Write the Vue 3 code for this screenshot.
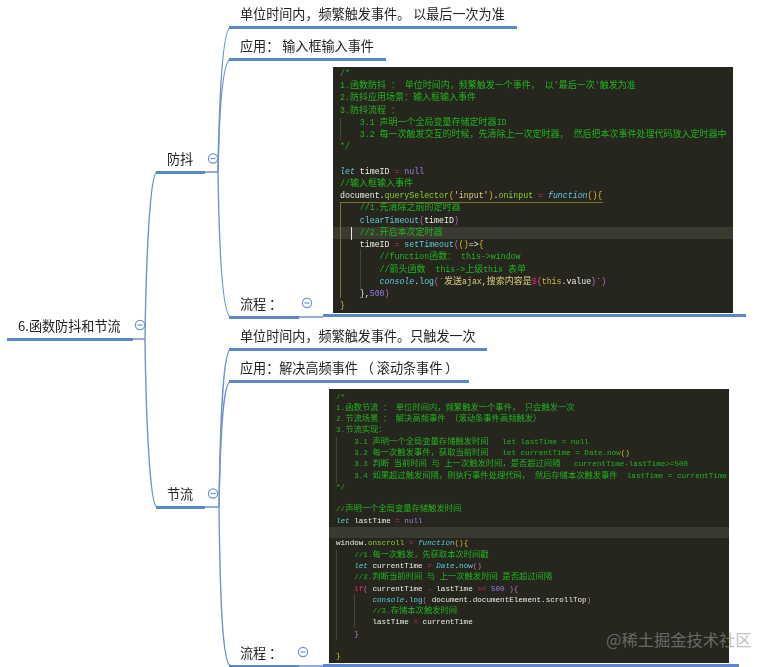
<script setup>
const cjkSplit = /([\u3000-\u303f\u4e00-\u9fff\uff00-\uffef]+)/

function row(...pairs) {
  const tokens = []
  for (let i = 0; i < pairs.length; i += 2) {
    pairs[i + 1].split(cjkSplit).forEach((text, n) => {
      if (text) tokens.push({ text, cls: [pairs[i], n % 2 ? 'cjk' : ''] })
    })
  }
  return tokens
}

const nodes = [
  { id: 1, text: '6.函数防抖和节流', x: 7, w: 126, uy: 339 },
  { id: 2, text: '防抖', x: 156, w: 49, uy: 172 },
  { id: 3, text: '节流', x: 156, w: 49, uy: 507 },
  { id: 4, text: '单位时间内，频繁触发事件。 以最后一次为准', x: 229, w: 288, uy: 27 },
  { id: 5, text: '应用： 输入框输入事件', x: 229, w: 157, uy: 59 },
  { id: 6, text: '流程 ：', x: 229, w: 70, uy: 317 },
  { id: 7, text: '单位时间内，频繁触发事件。只触发一次', x: 229, w: 258, uy: 349 },
  { id: 8, text: '应用：解决高频事件 （ 滚动条事件 ）', x: 229, w: 240, uy: 381 },
  { id: 9, text: '流程 ：', x: 229, w: 70, uy: 666 }
]

const toggles = [
  { id: 1, x: 140, y: 325 },
  { id: 2, x: 213, y: 158.5 },
  { id: 3, x: 213, y: 493.5 },
  { id: 4, x: 307, y: 303 },
  { id: 5, x: 303, y: 652 }
]

const curves = [
  'M133 339H145M205 172H218M205 507H219M299 317H323M299 666H323',
  'M145 339C146 260 150 172 157 172',
  'M145 339C146 420 150 507 157 507',
  'M218 172C219 110 222 27 231 27',
  'M218 172C219 120 222 59 231 59',
  'M218 172C219 240 222 317 231 317',
  'M219 507C220 440 222 349 231 349',
  'M219 507C220 450 222 381 231 381',
  'M219 507C220 590 222 666 231 666'
]

const debounce = [
  row('c', '/*'),
  row('c', "1.函数防抖 ： 单位时间内，频繁触发一个事件， 以'最后一次'触发为准"),
  row('c', '2.防抖应用场景：输入框输入事件'),
  row('c', '3.防抖流程 ：'),
  row('c', '    3.1 声明一个全局变量存储定时器ID'),
  row('c', '    3.2 每一次触发交互的时候，先清除上一次定时器， 然后把本次事件处理代码放入定时器中'),
  row('c', '*/'),
  [],
  row('i', 'let', 'w', ' timeID ', 'p', '=', 'u', ' null'),
  row('c', '//输入框输入事件'),
  row('w', 'document.', 'g', 'querySelector', 'y', '(', 's', "'input'", 'y', ')', 'w', '.', 'g', 'oninput', 'p', ' = ', 'i', 'function', 'y', '(){'),
  row('c', '    //1.先清除之前的定时器'),
  row('t', '    clearTimeout', 'm', '(', 'w', 'timeID', 'm', ')'),
  row('c', '    //2.开启本次定时器'),
  row('w', '    timeID ', 'p', '=', 't', ' setTimeout', 'm', '(', 'y', '()', 'w', '=>', 'y', '{'),
  row('c', '        //function函数： this->window'),
  row('c', '        //箭头函数  this->上级this 表单'),
  row('i', '        console', 'w', '.', 't', 'log', 'm', '(', 's', '`发送ajax,搜索内容是', 'p', '$', 'm', '{', 'y', 'this', 'w', '.value', 'm', '}', 's', '`', 'm', ')'),
  row('w', '    },', 'u', '500', 'm', ')'),
  row('y', '}')
]

const throttle = [
  row('c', '/*'),
  row('c', '1.函数节流 ： 单位时间内，频繁触发一个事件， 只会触发一次'),
  row('c', '2.节流场景 ： 解决高频事件 （滚动条事件高频触发）'),
  row('c', '3.节流实现：'),
  row('c', '    3.1 声明一个全局变量存储触发时间   let lastTime = null'),
  row('c', '    3.2 每一次触发事件，获取当前时间   let currentTime = Date.now', 'y', '()'),
  row('c', '    3.3 判断 当前时间 与 上一次触发时间，是否超过间隔   currentTime-lastTime>=500'),
  row('c', '    3.4 如果超过触发间隔，则执行事件处理代码， 然后存储本次触发事件  lastTime = currentTime'),
  row('c', '*/'),
  [],
  row('c', '//声明一个全局变量存储触发时间'),
  row('i', 'let', 'w', ' lastTime ', 'p', '=', 'u', ' null'),
  [],
  row('w', 'window.', 'g', 'onscroll', 'p', ' = ', 'i', 'function', 'y', '(){'),
  row('c', '    //1.每一次触发，先获取本次时间戳'),
  row('i', '    let', 'w', ' currentTime ', 'p', '=', 'i', ' Date', 'w', '.', 't', 'now', 'm', '()'),
  row('c', '    //2.判断当前时间 与 上一次触发时间 是否超过间隔'),
  row('p', '    if', 'm', '(', 'w', ' currentTime ', 'p', '-', 'w', ' lastTime ', 'p', '>=', 'u', ' 500', 'm', ' ){'),
  row('i', '        console', 'w', '.', 't', 'log', 'm', '(', 'w', ' document.documentElement.scrollTop', 'm', ')'),
  row('c', '        //3.存储本次触发时间'),
  row('w', '        lastTime ', 'p', '=', 'w', ' currentTime'),
  row('m', '    }'),
  [],
  row('y', '}')
]

const blocks = [
  {
    id: 'a', cls: 'large', x: 323, y: 67, w: 423, h: 250, gutter: 10, lines: debounce, active: 13,
    guides: [
      { id: 1, x: 7, y: 51, w: 1, h: 23, cls: 'faint' },
      { id: 2, x: 7, y: 135, w: 263, h: 1, cls: 'gold' },
      { id: 3, x: 7, y: 135, w: 1, h: 96, cls: 'gold' },
      { id: 4, x: 27, y: 182, w: 1, h: 41, cls: 'faint' },
      { id: 5, x: 18, y: 160, w: 1, h: 13, cls: 'caret' }
    ]
  },
  {
    id: 'b', cls: 'small', x: 323, y: 389, w: 416, h: 278, gutter: 6, lines: throttle, active: 12,
    guides: [
      { id: 1, x: 7, y: 48, w: 1, h: 46, cls: 'faint' },
      { id: 2, x: 7, y: 161, w: 1, h: 90, cls: 'faint' },
      { id: 3, x: 25, y: 205, w: 1, h: 34, cls: 'faint' }
    ]
  }
]
</script>

<template>
  <main class="canvas">
    <svg class="links" width="771" height="667" viewBox="0 0 771 667" fill="none">
      <path v-for="d in curves" :key="d" :d="d" />
    </svg>

    <div
      v-for="n in nodes"
      :key="n.id"
      class="node"
      :style="{ left: n.x + 'px', top: n.uy - 22.5 + 'px', width: n.w + 'px' }"
    >{{ n.text }}</div>

    <section
      v-for="b in blocks"
      :key="b.id"
      class="snippet"
      :class="b.cls"
      :style="{ left: b.x + 'px', top: b.y + 'px', width: b.w + 'px', height: b.h + 'px', paddingLeft: b.gutter + 'px' }"
    >
      <div class="editor">
        <div class="code">
          <div v-for="(line, i) in b.lines" :key="i" class="line" :class="{ active: i === b.active }">
            <span v-for="(t, j) in line" :key="j" :class="t.cls">{{ t.text }}</span>
          </div>
        </div>
        <i
          v-for="g in b.guides"
          :key="g.id"
          class="guide"
          :class="g.cls"
          :style="{ left: g.x + 'px', top: g.y + 'px', width: g.w + 'px', height: g.h + 'px' }"
        ></i>
      </div>
    </section>

    <svg class="toggles" width="771" height="667" viewBox="0 0 771 667" fill="#fff">
      <g v-for="t in toggles" :key="t.id">
        <circle :cx="t.x" :cy="t.y" r="4.6" />
        <path :d="`M${t.x - 2.6} ${t.y}h5.2`" />
      </g>
    </svg>

    <div class="mark">@稀土掘金技术社区</div>
  </main>
</template>

<style scoped>
.canvas {
  position: relative;
  width: 771px;
  height: 667px;
  overflow: hidden;
  background: #fff;
  font-family: "Noto Sans CJK SC", "Liberation Sans", sans-serif;
}

.links {
  position: absolute;
  inset: 0;
}

.links path {
  stroke: #6d94cc;
  stroke-width: 1.4;
}

.toggles {
  position: absolute;
  inset: 0;
}

.toggles circle,
.toggles path {
  stroke: #6f95cf;
  stroke-width: 1.2;
}

.node {
  position: absolute;
  box-sizing: border-box;
  height: 24px;
  padding: 0 0 1px 11px;
  border-bottom: 3px solid #5b87c5;
  font-size: 13.1px;
  line-height: 18px;
  color: #222;
  white-space: pre;
  filter: blur(0.2px);
}

.snippet {
  position: absolute;
  box-sizing: border-box;
  padding-bottom: 1px;
  border-bottom: 3px solid #5b87c5;
}

.editor {
  position: relative;
  width: 400px;
  height: 100%;
  overflow: hidden;
  background: #26261f;
}

.code {
  font-family: "Liberation Mono", "Noto Sans CJK SC", monospace;
  color: #e6e6df;
  white-space: pre;
  filter: blur(0.35px);
}

.line span {
  line-height: 0;
}

.large .code {
  padding-top: 1px;
  font-size: 8.25px;
}

.large .line {
  height: 12.23px;
  line-height: 12.23px;
  padding-left: 7px;
}

.large .cjk {
  font-size: 9px;
}

.small .code {
  padding-top: 2.5px;
  font-size: 7.6px;
}

.small .line {
  height: 11.3px;
  line-height: 11.3px;
  padding-left: 7px;
}

.small .cjk {
  font-size: 8.3px;
}

.cjk {
  font-family: "Noto Sans CJK SC", sans-serif;
}

.active {
  background: #3a3a31;
}

.c { color: #22b41f; }
.w { color: #eeeee6; }
.p { color: #e5276c; }
.u { color: #9a7be8; }
.i { color: #5fc7e0; font-style: italic; }
.g { color: #8ccf2c; }
.y { color: #e3b93a; }
.s { color: #d9cf7c; }
.t { color: #62c9dd; }
.m { color: #b86fc0; }

.guide {
  position: absolute;
}

.guide.faint {
  background: #45453c;
}

.guide.gold {
  background: #7d7232;
}

.guide.caret {
  background: #e8e8e0;
}

.mark {
  position: absolute;
  left: 606px;
  top: 628px;
  font-size: 16.3px;
  line-height: 22px;
  color: rgba(150, 150, 150, 0.62);
  white-space: nowrap;
}
</style>

<style>
html,
body {
  background: #fff;
}
</style>
